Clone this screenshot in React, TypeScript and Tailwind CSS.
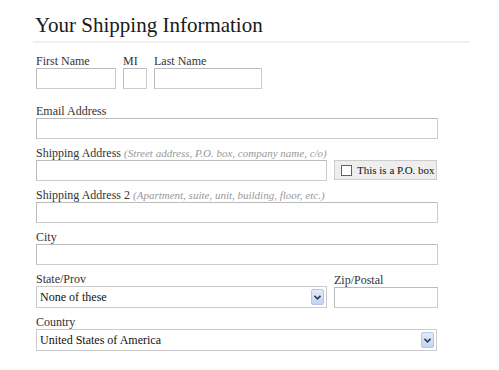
const serif = "font-['Liberation_Serif',serif]";

const Label = ({ text, hint }: { text: string; hint?: string }) => (
  <div className="h-[14px] text-[12px] leading-[14px] text-[#333] whitespace-nowrap">
    {text}
    {hint && <span className="ml-[3px] text-[11px] italic text-[#999]">{hint}</span>}
  </div>
);

const Input = ({ w }: { w: string }) => (
  <div className={`${w} h-[21px] shrink-0 border border-[#ccc] border-t-[#bbb] border-l-[#bbb] bg-white`} />
);

const SelectBox = ({ value, w }: { value: string; w: string }) => (
  <div className={`${w} h-[22px] border border-[#ccc] bg-white flex items-center justify-between pl-[3px] pr-[2px]`}>
    <span className="text-[12px] text-[#111]">{value}</span>
    <div className="w-[13px] h-[16px] rounded-[2px] border border-[#b4c6e8] bg-gradient-to-b from-[#e3ebf9] to-[#c3d3f0] flex items-center justify-center">
      <svg width="7" height="5" viewBox="0 0 7 5">
        <path d="M0.5 0.8 L3.5 3.8 L6.5 0.8" fill="none" stroke="#2b3a66" strokeWidth="1.6" />
      </svg>
    </div>
  </div>
);

export default function App() {
  return (
    <div className={`w-[499px] h-[370px] bg-white ${serif}`}>
      <div className="pt-[12px] pl-[35px]">
        <h1 className="text-[21px] leading-[26px] text-[#1a1a1a]">Your Shipping Information</h1>
      </div>
      <div className="ml-[33px] w-[437px] h-[2px] bg-[#f0f0f0] mt-[3px]" />

      <div className="pl-[36px] pt-[11px]">
        {/* name row */}
        <div className="flex gap-[7px]">
          <div className="flex flex-col">
            <Label text="First Name" />
            <Input w="w-[80px]" />
          </div>
          <div className="flex flex-col">
            <Label text="MI" />
            <Input w="w-[24px]" />
          </div>
          <div className="flex flex-col">
            <Label text="Last Name" />
            <Input w="w-[108px]" />
          </div>
        </div>

        <div className="mt-[15px]">
          <Label text="Email Address" />
          <Input w="w-[402px]" />
        </div>

        <div className="mt-[7px]">
          <Label text="Shipping Address" hint="(Street address, P.O. box, company name, c/o)" />
          <div className="flex gap-[7px]">
            <Input w="w-[291px]" />
            <div className="w-[103px] h-[20px] shrink-0 border border-[#ccc] bg-[#eee] flex items-center pl-[6px] gap-[5px] whitespace-nowrap">
              <div className="w-[11px] h-[11px] shrink-0 border border-[#5a6374] bg-white" />
              <span className="text-[11px] leading-[14px] text-[#111]">This is a P.O. box</span>
            </div>
          </div>
        </div>

        <div className="mt-[7px]">
          <Label text="Shipping Address 2" hint="(Apartment, suite, unit, building, floor, etc.)" />
          <Input w="w-[402px]" />
        </div>

        <div className="mt-[7px]">
          <Label text="City" />
          <Input w="w-[402px]" />
        </div>

        <div className="mt-[7px] flex gap-[7px]">
          <div className="flex flex-col">
            <Label text="State/Prov" />
            <SelectBox value="None of these" w="w-[291px]" />
          </div>
          <div className="flex flex-col pt-[1px]">
            <Label text="Zip/Postal" />
            <Input w="w-[104px]" />
          </div>
        </div>

        <div className="mt-[7px]">
          <Label text="Country" />
          <SelectBox value="United States of America" w="w-[401px]" />
        </div>
      </div>
    </div>
  );
}
